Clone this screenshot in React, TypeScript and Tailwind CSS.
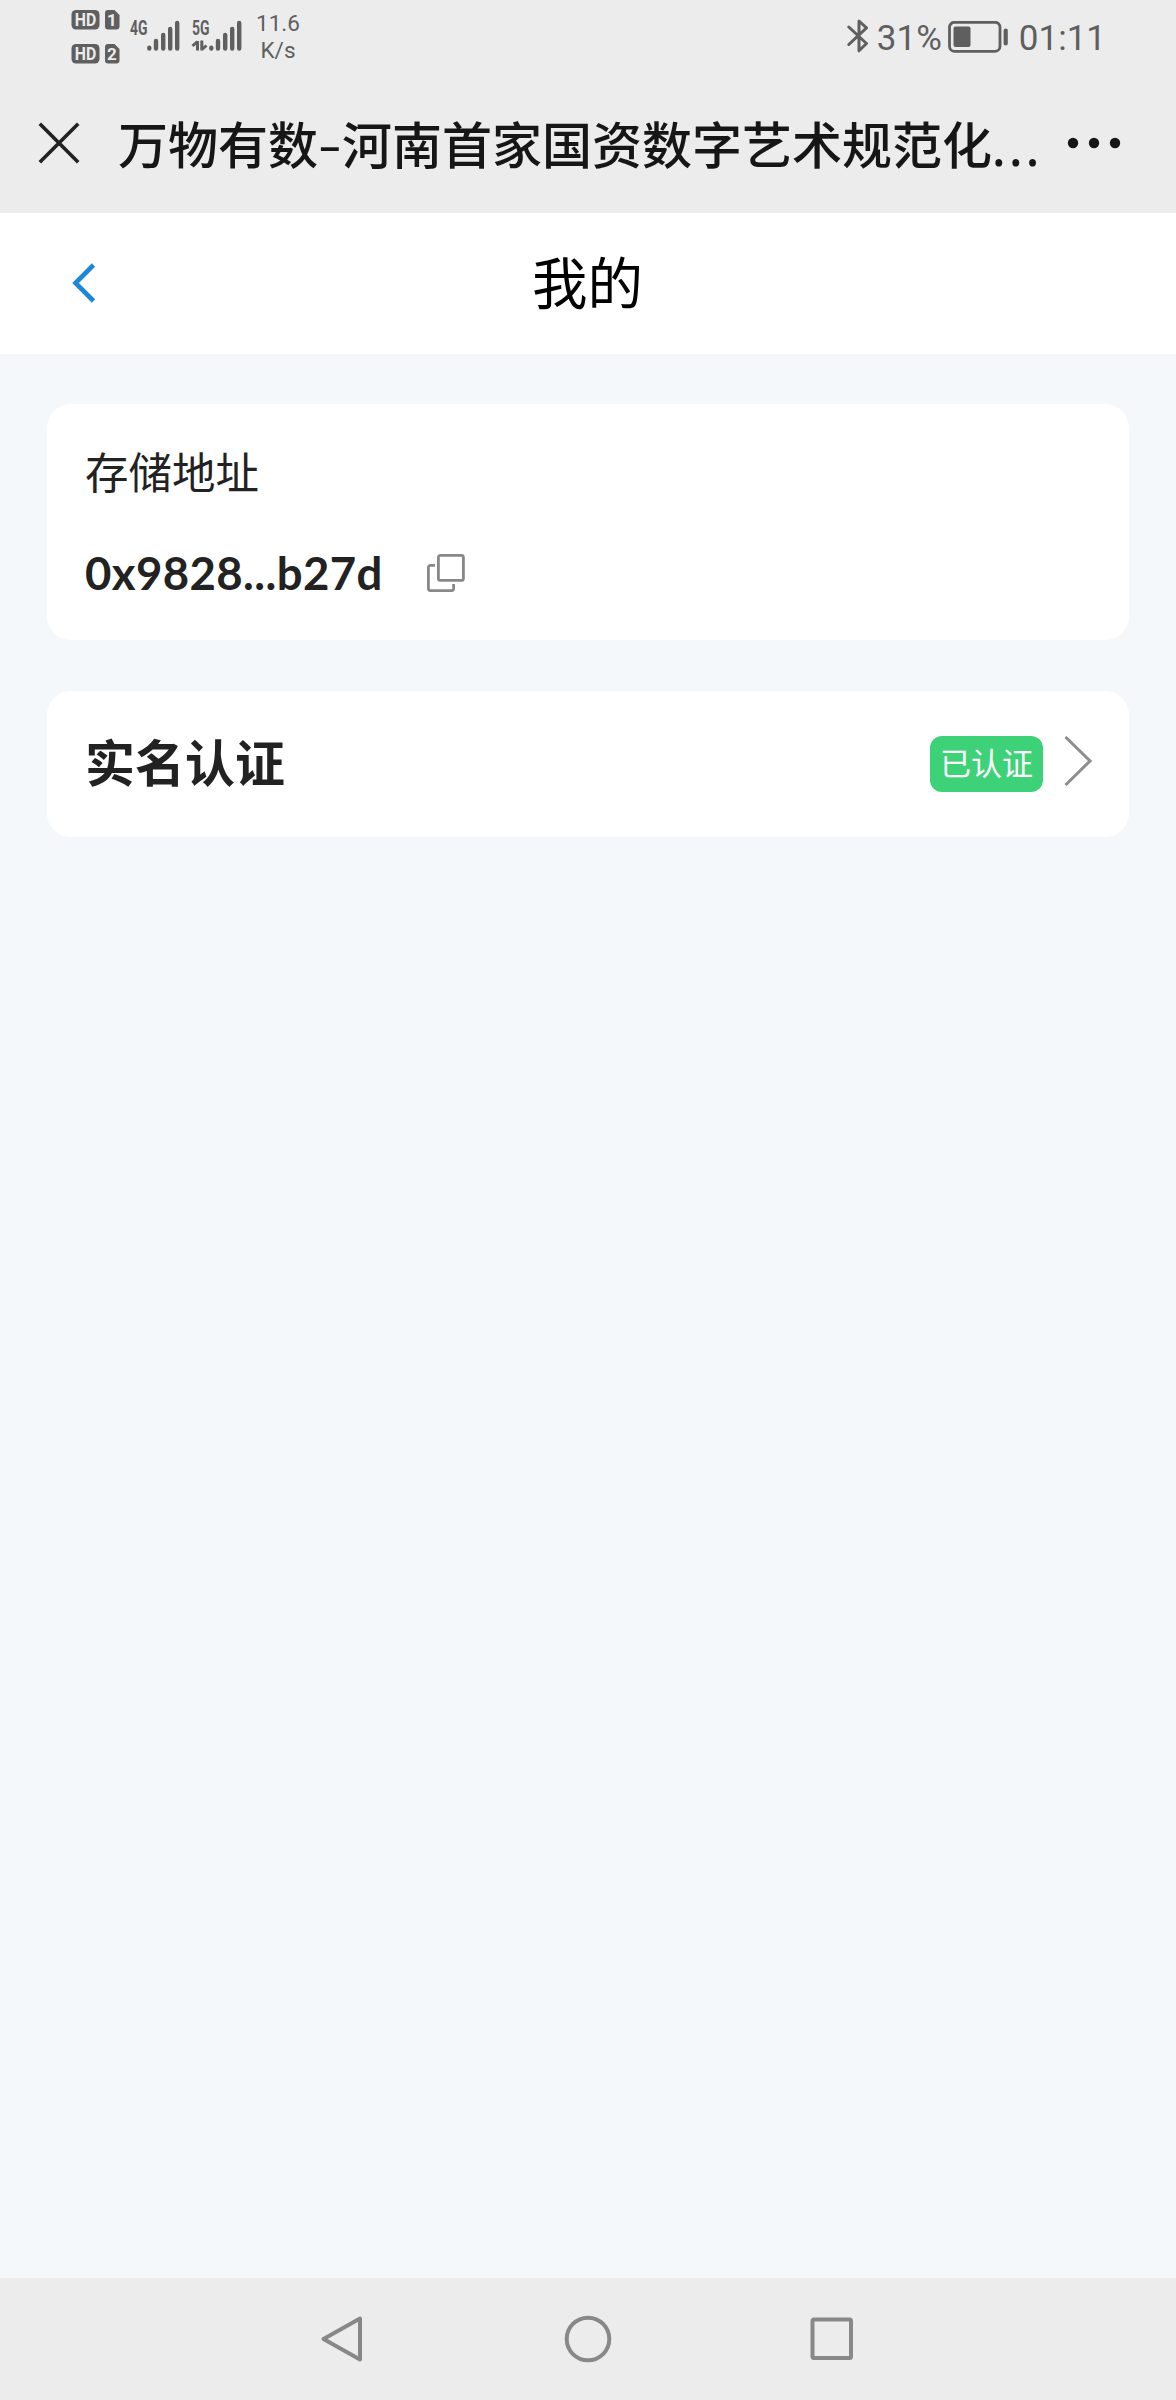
import type { ReactNode } from 'react';

// --- STATUS BAR ICONS ---
const SimBadge = ({ slot }: { slot: string }) => (
  <svg width="49" height="20" viewBox="0 0 49 20" className="block overflow-visible">
    <rect x="0.5" y="0" width="28" height="19.5" rx="4.5" fill="#5f5f5f" />
    <text x="14.5" y="16" textAnchor="middle" textLength="21.5" lengthAdjust="spacingAndGlyphs" fontSize="17.5" fontWeight="700" fill="#ececec" fontFamily="Roboto, sans-serif">HD</text>
    <path d="M37 0h6.5l5 5v11.5a3 3 0 0 1-3 3H37a3 3 0 0 1-3-3V3a3 3 0 0 1 3-3z" fill="#5f5f5f" />
    <text x="41" y="16" textAnchor="middle" fontSize="17" fontWeight="700" fill="#ececec" fontFamily="Roboto, sans-serif">{slot}</text>
  </svg>
);

const Signal = ({ label, active }: { label: string; active?: boolean }) => (
  <svg width="50" height="32" viewBox="0 0 50 32" className="block overflow-visible">
    <text x="0" y="14.6" textLength="17.5" lengthAdjust="spacingAndGlyphs" fontSize="19.5" fontWeight="700" fill="#5f5f5f" fontFamily="Roboto, sans-serif">{label}</text>
    {active && (
      <g stroke="#5f5f5f" strokeWidth="3" fill="none">
        <path d="M5.5 30.5V21M0.5 26L5.5 21.5" />
        <path d="M9.8 20.5V30.5M10 29.5L14.5 25.5" />
      </g>
    )}
    <g stroke="#5f5f5f" strokeWidth="4.4" strokeLinecap="round">
      <path d="M19.3 27.8V28.6M26 21V28.6M33.2 15V28.6M40.2 9V28.6M47.2 3V28.6" />
    </g>
  </svg>
);

const Bluetooth = () => (
  <svg width="22" height="34" viewBox="0 0 22 34" fill="none" stroke="#5f5f5f" strokeWidth="3" strokeLinecap="round" strokeLinejoin="round">
    <path d="M1.8 8L19.5 24.5L12 31.8V2L19.5 8.8L1.8 25.5" />
  </svg>
);

const Battery = () => (
  <svg width="61" height="32" viewBox="0 0 61 32">
    <rect x="1.5" y="1.3" width="50.5" height="29" rx="5" fill="none" stroke="#5f5f5f" strokeWidth="2.8" />
    <rect x="5.5" y="5.5" width="17" height="20.5" rx="2" fill="#5f5f5f" />
    <rect x="55.6" y="7.5" width="4.2" height="17" rx="2" fill="#5f5f5f" />
  </svg>
);

const StatusBar = () => (
  <div className="flex h-[74px] items-start pl-[71px] pr-[70px] text-[#5f5f5f]">
    <div className="flex flex-col gap-[14px] pt-[10px]">
      <SimBadge slot="1" />
      <SimBadge slot="2" />
    </div>
    <div className="ml-[10px] mt-[20px]">
      <Signal label="4G" />
    </div>
    <div className="ml-[12px] mt-[20px]">
      <Signal label="5G" active />
    </div>
    <div className="ml-[13px] mt-[10px] w-[46px] text-center text-[22.5px] leading-[27px]">
      <div>11.6</div>
      <div>K/s</div>
    </div>
    <div className="ml-auto flex items-start">
      <div className="mt-[19px]">
        <Bluetooth />
      </div>
      <span className="ml-[8px] mt-[18px] w-[71px] text-[35px] leading-[41px]">31%</span>
      <div className="mt-[21px]">
        <Battery />
      </div>
      <span className="ml-[10px] mt-[18px] text-[35px] leading-[41px]">01:11</span>
    </div>
  </div>
);

// --- WEBVIEW TITLE BAR ---
const TitleBar = () => (
  <div className="flex h-[139px] items-start pl-[38px] pr-[55px] text-[#161616]">
    <svg width="42" height="42" viewBox="0 0 42 42" className="mt-[48px]" stroke="#222" strokeWidth="3.6">
      <path d="M1.8 1.8L40.2 40.2M40.2 1.8L1.8 40.2" />
    </svg>
    <h1 className="ml-[38px] mt-[37px] flex whitespace-nowrap text-[50px] font-medium leading-[72px]">
      <span>万物有数</span>
      <span className="w-[24px] scale-x-[1.5] text-center font-normal">-</span>
      <span>河南首家国资数字艺术规范化</span>
      <span className="font-['Noto_Sans'] tracking-[3.3px]">...</span>
    </h1>
    <svg width="54" height="12" viewBox="0 0 54 12" className="ml-auto mt-[63px] shrink-0" fill="#161616">
      <circle cx="6" cy="6" r="5.2" />
      <circle cx="27" cy="6" r="5.2" />
      <circle cx="48" cy="6" r="5.2" />
    </svg>
  </div>
);

const PageHeader = () => (
  <header className="flex h-[141px] items-center bg-white px-[72px]">
    <svg width="24" height="40" viewBox="0 0 24 40" className="mb-[2px]" fill="none" stroke="#1b87d6" strokeWidth="4.6">
      <path d="M21.5 2L3.5 20L21.5 38" />
    </svg>
    <h2 className="flex-1 pr-[25px] pt-[5px] text-center text-[55.5px] leading-[80px] text-black">我的</h2>
  </header>
);

const Card = ({ children, className }: { children: ReactNode; className: string }) => (
  <section className={`rounded-[24px] bg-white px-[38px] ${className}`}>{children}</section>
);

const CopyIcon = () => (
  <svg width="38" height="38" viewBox="0 0 38 38" fill="none" stroke="#888" strokeWidth="2.8">
    <rect x="11.4" y="1.4" width="25" height="25" rx="2" />
    <path d="M8 11.4H3.4a2 2 0 0 0-2 2V34.6a2 2 0 0 0 2 2H24.6a2 2 0 0 0 2-2V30" />
  </svg>
);

const NavBar = () => (
  <nav className="flex h-[122px] items-center justify-between bg-[#ececec] pl-[320px] pr-[322px]">
    <svg width="44" height="48" viewBox="0 0 44 48" fill="none" stroke="#888" strokeWidth="4" strokeLinejoin="round">
      <path d="M40 3.5V44.5L3.5 24Z" />
    </svg>
    <svg width="48" height="48" viewBox="0 0 48 48" className="ml-[2px]" fill="none" stroke="#888" strokeWidth="4">
      <circle cx="24" cy="24" r="21.3" />
    </svg>
    <svg width="44" height="44" viewBox="0 0 44 44" fill="none" stroke="#888" strokeWidth="4">
      <rect x="2.5" y="2.5" width="38.5" height="38.5" rx="1.5" />
    </svg>
  </nav>
);

export default function App() {
  return (
    <div className="flex h-[2400px] w-[1176px] flex-col overflow-hidden bg-[#f4f8fb] font-[Roboto,'Noto_Sans_CJK_SC',sans-serif]">
      <div className="bg-[#ececec]">
        <StatusBar />
        <TitleBar />
      </div>
      <PageHeader />

      <main className="flex flex-1 flex-col gap-[51px] px-[47px] pt-[50px]">
        <Card className="h-[236px] pt-[39px] text-[#222]">
          <p className="text-[43.5px] leading-[64px]">存储地址</p>
          <div className="mt-[36px] flex items-center">
            <span className="font-[Lato,sans-serif] text-[45.5px] font-bold leading-[60px] tracking-[0.4px]">0x9828...b27d</span>
            <button className="ml-[44px]" aria-label="复制">
              <CopyIcon />
            </button>
          </div>
        </Card>

        <Card className="flex h-[146px] items-center text-[#222]">
          <span className="mt-[2px] text-[50px] font-bold leading-[72px]">实名认证</span>
          <span className="ml-auto flex h-[56px] w-[113px] items-center justify-center rounded-[12px] bg-[#3ed278] pt-[2px] text-[31px] leading-[46px] text-white">
            已认证
          </span>
          <svg width="28" height="50" viewBox="0 0 28 50" className="-mr-px ml-[21px] mt-[-7px]" fill="none" stroke="#8e8e8e" strokeWidth="3">
            <path d="M1.5 1L26 25L1.5 49" />
          </svg>
        </Card>
      </main>

      <NavBar />
    </div>
  );
}
